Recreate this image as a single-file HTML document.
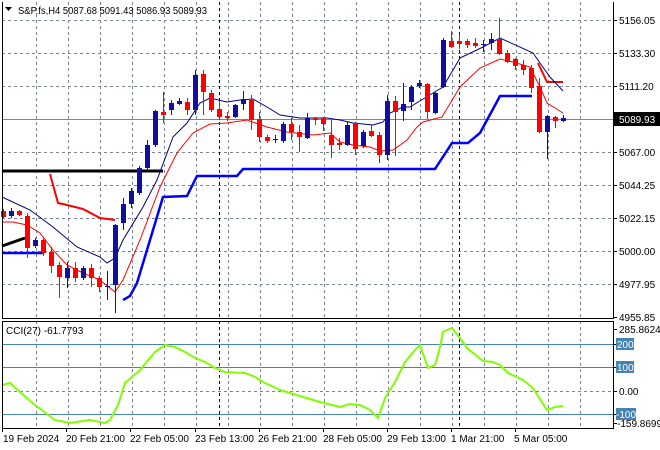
<!DOCTYPE html>
<html><head><meta charset="utf-8"><style>
html,body{margin:0;padding:0;background:#fff;}
svg{display:block;font-family:"Liberation Sans",sans-serif;font-size:10px;}
</style></head><body>
<svg width="660" height="450" viewBox="0 0 660 450" xmlns="http://www.w3.org/2000/svg">
<rect width="660" height="450" fill="#fff"/>
<g stroke="#7a8591" stroke-width="1" stroke-dasharray="3,3" fill="none">
<path d="M2 20.5H613M2 53.5H613M2 86.5H613M2 152.5H613M2 185.5H613M2 218.5H613M2 251.5H613M2 284.5H613"/>
<path d="M2 391.5H613"/>
<path d="M36.5 2V318M68.5 2V318M100.5 2V318M132.5 2V318M164.5 2V318M196.5 2V318M228.5 2V318M260.5 2V318M292.5 2V318M324.5 2V318M356.5 2V318M388.5 2V318M420.5 2V318M452.5 2V318M484.5 2V318M516.5 2V318M548.5 2V318M580.5 2V318"/>
<path d="M36.5 321V428M68.5 321V428M100.5 321V428M132.5 321V428M164.5 321V428M196.5 321V428M228.5 321V428M260.5 321V428M292.5 321V428M324.5 321V428M356.5 321V428M388.5 321V428M420.5 321V428M452.5 321V428M484.5 321V428M516.5 321V428M548.5 321V428M580.5 321V428"/>
</g>
<g stroke="#000" stroke-dasharray="3,3"><path d="M219.5 2V318M459.5 2V318M219.5 321V428M459.5 321V428"/></g>
<path d="M2 119.5H613" stroke="#7a8591"/>
<polyline fill="none" stroke="#000" stroke-width="3" points="2,171 163,171"/>
<polyline fill="none" stroke="#000" stroke-width="3" points="2,246 25,238"/>
<polyline fill="none" stroke="#0000ff" stroke-width="2.5" points="2,253 43,253"/>
<polyline fill="none" stroke="#0000ff" stroke-width="2.5" points="123,300 130,296 137,283 163,197 187,196 197,176 237,176 243,169 435,169 452,143 468,143 480,133 500,96 532,96"/>
<polyline fill="none" stroke="#ff0000" stroke-width="2" points="50,174 58,203 67,205 83,209 100,218 115,220"/>
<polyline fill="none" stroke="#ff0000" stroke-width="2" points="538,63 547,82 563,82"/>
<polyline fill="none" stroke="#000080" stroke-width="1" points="2,197 30,210 53,227 77,247 100,257 107,263 115,258 123,240 143,207 157,180 173,137 187,123 200,103 210,98 227,102 240,100 253,99 267,107 280,115 300,118 327,118 340,120 353,123 373,125 383,122 390,113 403,107 410,107 433,93 443,87 460,58 483,47 500,38 533,53 540,63 550,77 563,91"/>
<polyline fill="none" stroke="#ff0000" stroke-width="1" points="3,222 13,222 27,225 40,233 53,250 67,265 83,273 100,280 115,292 123,280 140,240 160,187 177,153 193,133 210,124 227,123 247,120 267,127 287,132 313,135 330,133 340,142 353,145 370,147 380,151 393,150 407,140 417,127 423,122 442,117 460,87 480,68 500,59 513,62 530,67 540,87 547,103 563,113"/>
<g stroke-width="1">
<path stroke="#ff0000" d="M3.5 209V218M19.5 210V216M27.5 213V258M43.5 238V256M51.5 247V273M59.5 262V298M75.5 262V282M91.5 264V287M99.5 276V292M163.5 92V123M187.5 98V115M203.5 70V115M211.5 90V112M219.5 101V120M227.5 112V121M251.5 95V130M259.5 112V142M267.5 135V143M291.5 118V140M299.5 125V152M315.5 117V125M323.5 117V131M331.5 120V158M339.5 138V150M355.5 122V155M371.5 125V137M379.5 132V163M395.5 96V156M427.5 83V119M451.5 31V48M459.5 34V49M467.5 39V48M475.5 38V48M499.5 18V55M507.5 50V63M515.5 58V70M523.5 60V75M531.5 65V93M539.5 78V133M555.5 116V128"/>
<path stroke="#1010a0" d="M11.5 208V218M35.5 238V248M67.5 262V288M83.5 266V280M107.5 271V300M115.5 224V313M123.5 198V230M131.5 188V208M139.5 166V195M147.5 140V172M155.5 110V147M171.5 100V115M179.5 98V105M195.5 70V115M235.5 104V118M243.5 91V110M275.5 135V143M283.5 122V143M307.5 113V139M347.5 122V146M363.5 130V148M387.5 95V160M403.5 83V121M411.5 85V110M419.5 80V88M435.5 92V114M443.5 38V88M483.5 40V52M491.5 33V50M547.5 115V159M563.5 115V122"/>
</g>
<g fill="#ff0000">
<rect x="1" y="211" width="5" height="6"/><rect x="17" y="211" width="5" height="4"/><rect x="25" y="216" width="5" height="32"/><rect x="41" y="240" width="5" height="13"/><rect x="49" y="252" width="5" height="14"/><rect x="57" y="265" width="5" height="12"/><rect x="73" y="268" width="5" height="10"/><rect x="89" y="268" width="5" height="10"/><rect x="97" y="278" width="5" height="9"/><rect x="161" y="112" width="5" height="3"/><rect x="185" y="102" width="5" height="8"/><rect x="201" y="74" width="5" height="18"/><rect x="209" y="93" width="5" height="17"/><rect x="217" y="109" width="5" height="8"/><rect x="225" y="116" width="5" height="2"/><rect x="249" y="100" width="5" height="20"/><rect x="257" y="119" width="5" height="18"/><rect x="265" y="137" width="5" height="4"/><rect x="289" y="124" width="5" height="8"/><rect x="297" y="132" width="5" height="5"/><rect x="313" y="118" width="5" height="2"/><rect x="321" y="118" width="5" height="6"/><rect x="329" y="135" width="5" height="10"/><rect x="337" y="143" width="5" height="2"/><rect x="353" y="123" width="5" height="26"/><rect x="369" y="131" width="5" height="5"/><rect x="377" y="135" width="5" height="20"/><rect x="393" y="101" width="5" height="11"/><rect x="425" y="84" width="5" height="28"/><rect x="449" y="41" width="5" height="6"/><rect x="457" y="41" width="5" height="3"/><rect x="465" y="41" width="5" height="4"/><rect x="473" y="43" width="5" height="3"/><rect x="497" y="39" width="5" height="15"/><rect x="505" y="53" width="5" height="9"/><rect x="513" y="59" width="5" height="7"/><rect x="521" y="65" width="5" height="5"/><rect x="529" y="68" width="5" height="20"/><rect x="537" y="86" width="5" height="46"/><rect x="553" y="117" width="5" height="4"/>
</g>
<g fill="#1010a0">
<rect x="9" y="211" width="5" height="5"/><rect x="33" y="240" width="5" height="6"/><rect x="65" y="268" width="5" height="10"/><rect x="81" y="268" width="5" height="10"/><rect x="105" y="286" width="5" height="1"/><rect x="113" y="225" width="5" height="60"/><rect x="121" y="204" width="5" height="19"/><rect x="129" y="191" width="5" height="13"/><rect x="137" y="168" width="5" height="25"/><rect x="145" y="145" width="5" height="23"/><rect x="153" y="111" width="5" height="34"/><rect x="169" y="103" width="5" height="7"/><rect x="177" y="101" width="5" height="3"/><rect x="193" y="75" width="5" height="35"/><rect x="233" y="105" width="5" height="12"/><rect x="241" y="99" width="5" height="5"/><rect x="273" y="139" width="5" height="1"/><rect x="281" y="124" width="5" height="17"/><rect x="305" y="118" width="5" height="20"/><rect x="345" y="125" width="5" height="20"/><rect x="361" y="132" width="5" height="14"/><rect x="385" y="101" width="5" height="54"/><rect x="401" y="104" width="5" height="7"/><rect x="409" y="87" width="5" height="15"/><rect x="417" y="83" width="5" height="3"/><rect x="433" y="93" width="5" height="20"/><rect x="441" y="40" width="5" height="47"/><rect x="481" y="44" width="5" height="1"/><rect x="489" y="39" width="5" height="4"/><rect x="545" y="116" width="5" height="16"/><rect x="561" y="118" width="5" height="3"/>
</g>
<path d="M2 344.5H613M2 367.5H613M2 414.5H613" stroke="#4682b4"/>
<polyline fill="none" stroke="#7fff00" stroke-width="2" points="2,385 10,383 20,392 35,405 55,420 70,423 90,420 105,423 110,420 118,405 125,383 140,370 155,352 165,345 175,347 185,352 195,358 205,362 215,368 225,372 245,373 255,377 265,383 280,390 300,396 320,402 340,407 350,404 360,405 370,410 378,418 385,398 395,382 405,362 415,350 420,345 428,368 435,365 440,347 443,332 452,328 460,338 467,348 483,361 493,362 500,365 508,373 523,380 533,388 547,410 555,407 563,406"/>
<g stroke="#000" fill="none">
<path d="M2.5 2V318.5H613.5V2"/>
<path d="M2.5 321.5H613.5V428.5H2.5Z"/>
</g>
<g stroke="#000"><path d="M613 20.5h4M613 53.5h4M613 86.5h4M613 152.5h4M613 185.5h4M613 218.5h4M613 251.5h4M613 284.5h4M613 317.5h4M613 329.5h4M613 344.5h4M613 367.5h4M613 391.5h4M613 414.5h4M613 423.5h4"/></g>
<g fill="#000">
<text x="619" y="24">5156.05</text><text x="619" y="57">5133.30</text><text x="619" y="90">5111.20</text><text x="619" y="156">5067.00</text><text x="619" y="189">5044.25</text><text x="619" y="222">5022.15</text><text x="619" y="255">5000.00</text><text x="619" y="288">4977.95</text><text x="619" y="321">4955.85</text>
<text x="619" y="333">285.8624</text><text x="619" y="395">0.00</text><text x="617" y="427">-159.8699</text>
</g>
<rect x="614" y="112" width="46" height="14" fill="#000"/>
<text x="619" y="123" fill="#fff">5089.93</text>
<rect x="616" y="338" width="18" height="12" fill="#4682b4"/><text x="617" y="348" fill="#fff">200</text>
<rect x="616" y="361" width="18" height="12" fill="#4682b4"/><text x="617" y="371" fill="#fff">100</text>
<rect x="616" y="408" width="20" height="12" fill="#4682b4"/><text x="616" y="418" fill="#fff">-100</text>
<path d="M5 7h7l-3.5 4z" fill="#000"/>
<text x="18" y="14" fill="#000" textLength="189" lengthAdjust="spacingAndGlyphs">S&amp;P.fs,H4  5087.68 5091.43 5086.93 5089.93</text>
<text x="6" y="334" fill="#000">CCI(27) -61.7793</text>
<g stroke="#000"><path d="M2.5 428v4M66.5 428v4M130.5 428v4M195.5 428v4M259.5 428v4M323.5 428v4M387.5 428v4M451.5 428v4M515.5 428v4"/></g>
<g fill="#000">
<text x="3" y="442">19 Feb 2024</text><text x="66" y="442">20 Feb 21:00</text><text x="130" y="442">22 Feb 05:00</text><text x="195" y="442">23 Feb 13:00</text><text x="258" y="442">26 Feb 21:00</text><text x="323" y="442">28 Feb 05:00</text><text x="387" y="442">29 Feb 13:00</text><text x="451" y="442">1 Mar 21:00</text><text x="514" y="442">5 Mar 05:00</text>
</g>
</svg>
</body></html>
